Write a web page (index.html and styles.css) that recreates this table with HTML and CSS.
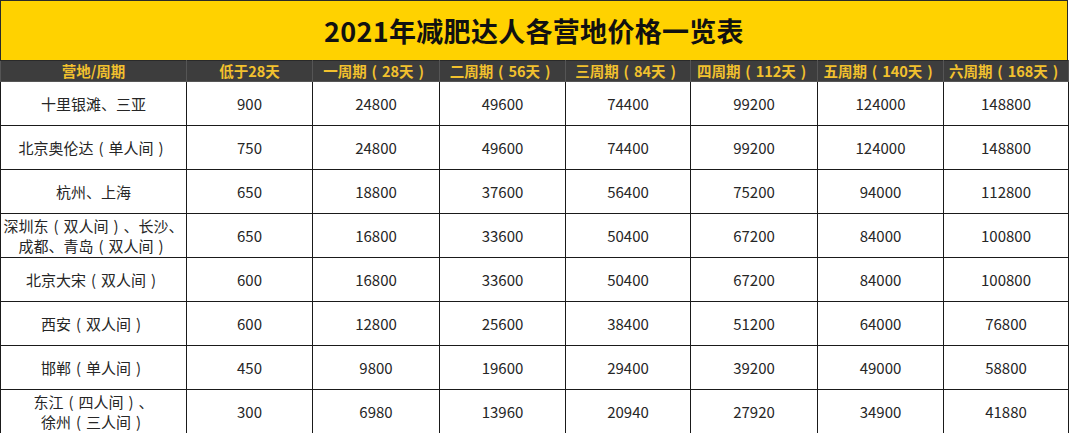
FILE: index.html
```html
<!DOCTYPE html>
<html lang="zh">
<head>
<meta charset="utf-8">
<link rel="stylesheet" href="styles.css">
</head>
<body>
<div class="sheet">
  <div class="title">2021年减肥达人各营地价格一览表</div>
  <table class="prices">
    <colgroup>
      <col class="c0"><col class="c1"><col class="c2"><col class="c3"><col class="c4"><col class="c5"><col class="c6"><col class="c7">
    </colgroup>
    <thead>
      <tr>
        <th>营地/周期</th>
        <th>低于28天</th>
        <th>一周期<span class="p">(</span>28天<span class="p">)</span></th>
        <th>二周期<span class="p">(</span>56天<span class="p">)</span></th>
        <th>三周期<span class="p">(</span>84天<span class="p">)</span></th>
        <th>四周期<span class="p">(</span>112天<span class="p">)</span></th>
        <th>五周期<span class="p">(</span>140天<span class="p">)</span></th>
        <th>六周期<span class="p">(</span>168天<span class="p">)</span></th>
      </tr>
    </thead>
    <tbody>
      <tr><td>十里银滩、三亚</td><td>900</td><td>24800</td><td>49600</td><td>74400</td><td>99200</td><td>124000</td><td>148800</td></tr>
      <tr><td>北京奥伦达<span class="p">(</span>单人间<span class="p">)</span></td><td>750</td><td>24800</td><td>49600</td><td>74400</td><td>99200</td><td>124000</td><td>148800</td></tr>
      <tr><td>杭州、上海</td><td>650</td><td>18800</td><td>37600</td><td>56400</td><td>75200</td><td>94000</td><td>112800</td></tr>
      <tr><td>深圳东<span class="p">(</span>双人间<span class="p">)</span>、长沙、<br>成都、青岛<span class="p">(</span>双人间<span class="p">)</span></td><td>650</td><td>16800</td><td>33600</td><td>50400</td><td>67200</td><td>84000</td><td>100800</td></tr>
      <tr><td>北京大宋<span class="p">(</span>双人间<span class="p">)</span></td><td>600</td><td>16800</td><td>33600</td><td>50400</td><td>67200</td><td>84000</td><td>100800</td></tr>
      <tr><td>西安<span class="p">(</span>双人间<span class="p">)</span></td><td>600</td><td>12800</td><td>25600</td><td>38400</td><td>51200</td><td>64000</td><td>76800</td></tr>
      <tr><td>邯郸<span class="p">(</span>单人间<span class="p">)</span></td><td>450</td><td>9800</td><td>19600</td><td>29400</td><td>39200</td><td>49000</td><td>58800</td></tr>
      <tr><td>东江<span class="p">(</span>四人间<span class="p">)</span>、<br>徐州<span class="p">(</span>三人间<span class="p">)</span></td><td>300</td><td>6980</td><td>13960</td><td>20940</td><td>27920</td><td>34900</td><td>41880</td></tr>
    </tbody>
  </table>
</div>
</body>
</html>
```
FILE: styles.css
```css
html, body {
  margin: 0;
  padding: 0;
  background: #ffffff;
}
.sheet {
  width: 1068px;
  font-family: "Noto Sans CJK SC", "Noto Sans", sans-serif;
}
.title {
  height: 59px;
  border: 1px solid #2a2a2a;
  border-bottom: none;
  background: #ffd200;
  color: #111;
  font-weight: 700;
  font-size: 27px;
  line-height: 59px;
  text-align: center;
  letter-spacing: 0.3px;
}
.prices {
  width: 1068px;
  border-collapse: collapse;
  table-layout: fixed;
}
.c0 { width: 186px; }
.c1 { width: 126px; }
.c2 { width: 127px; }
.c3 { width: 126px; }
.c4 { width: 125px; }
.c5 { width: 127px; }
.c6 { width: 126px; }
.c7 { width: 125px; }
.p {
  display: inline-block;
  width: 1em;
  text-align: center;
}
.prices th {
  height: 20px;
  padding: 0;
  background: #3d3d3d;
  color: #f2c12e;
  font-size: 14.5px;
  font-weight: 700;
  line-height: 18px;
  border: 1px solid #555;
  border-top-color: #2a2a2a;
  white-space: nowrap;
  overflow: hidden;
}
.prices th .p {
  width: 1.05em;
}
.prices td {
  height: 43px;
  padding: 0;
  border: 1px solid #1a1a1a;
  text-align: center;
  color: #262626;
  font-size: 15px;
  line-height: 20px;
  white-space: nowrap;
}
```
